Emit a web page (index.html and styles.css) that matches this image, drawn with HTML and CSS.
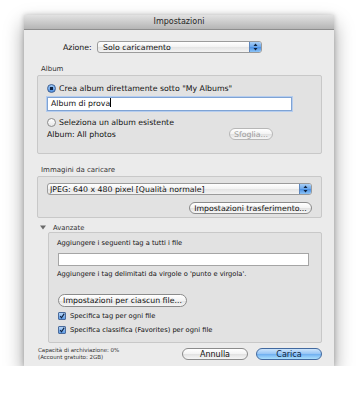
FILE: index.html
```html
<!DOCTYPE html>
<html lang="it">
<head>
    <meta charset="UTF-8">
    <title>Impostazioni</title>
    <link rel="stylesheet" href="styles.css">
</head>
<body>
    <div class="window">
        <div class="titlebar">Impostazioni</div>
        <div class="content">
            <div class="action-row">
                <span class="action-label">Azione:</span>
                <div class="popup action-popup">
                    <span class="popup-text">Solo caricamento</span>
                    <span class="stepper"><svg width="5" height="8" viewBox="0 0 5 8"><path d="M2.5 0.5 L4.5 3 L0.5 3 Z M0.5 5 L4.5 5 L2.5 7.5 Z" fill="#10243f"/></svg></span>
                </div>
            </div>

            <div class="group-title">Album</div>
            <div class="group album-box">
                <div class="choice">
                    <span class="radio on"></span>
                    <span>Crea album direttamente sotto "My Albums"</span>
                </div>
                <div class="field focused">Album di prova<span class="caret"></span></div>
                <div class="choice second">
                    <span class="radio"></span>
                    <span>Seleziona un album esistente</span>
                </div>
                <div class="album-row">
                    <span>Album: All photos</span>
                    <span class="button disabled browse">Sfoglia...</span>
                </div>
            </div>

            <div class="group-title">Immagini da caricare</div>
            <div class="group images-box">
                <div class="popup">
                    <span class="popup-text tight">JPEG: 640 x 480 pixel [Qualità normale]</span>
                    <span class="stepper"><svg width="5" height="8" viewBox="0 0 5 8"><path d="M2.5 0.5 L4.5 3 L0.5 3 Z M0.5 5 L4.5 5 L2.5 7.5 Z" fill="#10243f"/></svg></span>
                </div>
                <div class="right">
                    <span class="button transfer">Impostazioni trasferimento...</span>
                </div>
            </div>

            <div class="disclosure">
                <svg width="6" height="5" viewBox="0 0 6 5"><path d="M0 0.5 L6 0.5 L3 4.5 Z" fill="#6a6a6a"/></svg>
                <span>Avanzate</span>
            </div>
            <div class="group advanced-box">
                <div class="line">Aggiungere i seguenti tag a tutti i file</div>
                <div class="field tags"></div>
                <div class="line hint">Aggiungere i tag delimitati da virgole o 'punto e virgola'.</div>
                <span class="button per-file">Impostazioni per ciascun file...</span>
                <div class="check-row first">
                    <span class="checkbox"><svg width="8" height="8" viewBox="0 0 8 8"><path d="M1.5 4 L3.3 6.3 L7 0.8" fill="none" stroke="#0f2240" stroke-width="1.5"/></svg></span>
                    <span>Specifica tag per ogni file</span>
                </div>
                <div class="check-row">
                    <span class="checkbox"><svg width="8" height="8" viewBox="0 0 8 8"><path d="M1.5 4 L3.3 6.3 L7 0.8" fill="none" stroke="#0f2240" stroke-width="1.5"/></svg></span>
                    <span>Specifica classifica (Favorites) per ogni file</span>
                </div>
            </div>

            <div class="footer">
                <div class="storage">
                    <div>Capacità di archiviazione: 0%</div>
                    <div>(Account gratuito: 2GB)</div>
                </div>
                <span class="button cancel">Annulla</span>
                <span class="button default">Carica</span>
            </div>
        </div>
    </div>
</body>
</html>
```

FILE: styles.css
```css
body {
    margin: 0;
    background: #fff;
    font-family: "DejaVu Sans", sans-serif;
    font-size: 7.8px;
    color: #111;
}
.window {
    width: 310px;
    height: 351px;
    margin: 15px 0 0 24px;
    background: #ebebeb;
    box-shadow: 0 9px 18px rgba(0,0,0,0.38), 0 0 5px rgba(0,0,0,0.22);
}
.titlebar {
    height: 14px;
    line-height: 14px;
    text-align: center;
    font-size: 8px;
    background: linear-gradient(#e2e2e2, #b5b5b5);
    border-bottom: 1px solid #8e8e8e;
    color: #262626;
}
.content {
    padding: 0 12px 0 13px;
}
.action-row {
    display: flex;
    align-items: center;
    margin-top: 11px;
    height: 12px;
}
.action-label {
    margin-left: 26px;
    width: 29px;
    margin-right: 5px;
}
.popup {
    display: flex;
    align-items: center;
    height: 12px;
    box-sizing: border-box;
    border: 1px solid #9b9b9b;
    border-radius: 3px;
    background: linear-gradient(#ffffff, #f2f2f2 50%, #e4e4e4 51%, #f3f3f3);
    overflow: hidden;
}
.action-popup {
    width: 165px;
}
.popup-text {
    padding-left: 5px;
    flex: 1;
    white-space: nowrap;
}
.popup-text.tight {
    padding-left: 2px;
}
.stepper {
    width: 11px;
    height: 100%;
    display: flex;
    align-items: center;
    justify-content: center;
    background: linear-gradient(#a9cff6, #6aa6ea 50%, #4a8fe2 51%, #8cc3f7);
    border-left: 1px solid #5c86bd;
}
.group-title {
    margin-top: 12px;
    height: 9px;
    line-height: 9px;
    padding-left: 4px;
    font-size: 7px;
    color: #333;
}
.group {
    box-sizing: border-box;
    border: 1px solid #c8c8c8;
    border-radius: 2px;
    background: #e2e2e2;
}
.album-box {
    margin-top: 1px;
    height: 79px;
    padding: 6px 10px 0 9px;
}
.choice {
    display: flex;
    align-items: center;
    height: 12px;
}
.choice.second {
    margin-top: 5px;
}
.radio {
    width: 9px;
    height: 9px;
    box-sizing: border-box;
    border-radius: 50%;
    border: 1px solid #8a8a8a;
    background: linear-gradient(#ffffff, #e6e6e6);
    margin-right: 3px;
}
.radio.on {
    border-color: #3d5f92;
    background: radial-gradient(circle, #0f2442 0, #0f2442 1.5px, transparent 2px), linear-gradient(#9cc6f4, #4f8fe0);
}
.field {
    box-sizing: border-box;
    height: 14px;
    line-height: 12px;
    margin-top: 3px;
    width: 245px;
    padding-left: 3px;
    background: #fff;
    border: 1px solid #9a9a9a;
}
.field.focused {
    border-color: #7fa3d4;
    box-shadow: 0 0 0 1px #b5cdef;
}
.caret {
    display: inline-block;
    width: 1px;
    height: 9px;
    background: #000;
    vertical-align: -1px;
}
.album-row {
    display: flex;
    align-items: center;
    height: 12px;
}
.button {
    display: inline-flex;
    align-items: center;
    justify-content: center;
    box-sizing: border-box;
    height: 12px;
    border: 1px solid #8b8b8b;
    border-radius: 7px;
    background: linear-gradient(#ffffff, #f3f3f3 50%, #e1e1e1 51%, #f6f6f6);
    white-space: nowrap;
}
.button.disabled {
    color: #9c9c9c;
    border-color: #b7b7b7;
}
.browse {
    width: 44px;
    margin-left: auto;
    margin-right: 38px;
}
.images-box {
    margin-top: 1px;
    height: 42px;
    padding: 6px 9px 0 9px;
}
.right {
    display: flex;
    justify-content: flex-end;
    margin-top: 7px;
}
.transfer {
    width: 123px;
}
.disclosure {
    display: flex;
    align-items: center;
    margin-top: 5px;
    height: 9px;
    padding-left: 3px;
    font-size: 6.8px;
    color: #333;
}
.disclosure span {
    margin-left: 7px;
}
.advanced-box {
    margin-left: 11px;
    height: 111px;
    padding: 6px 0 0 8px;
}
.line {
    height: 9px;
    line-height: 9px;
    font-size: 6.7px;
}
.field.tags {
    margin: 5px 0 0 1px;
    width: 251px;
    height: 13px;
    border-color: #a5a5a5;
}
.hint {
    margin-top: 4px;
}
.per-file {
    margin: 15px 0 0 1px;
    width: 129px;
    height: 13px;
}
.check-row {
    display: flex;
    align-items: center;
    height: 12px;
    margin-top: 2px;
    font-size: 6.7px;
}
.check-row.first {
    margin-top: 3px;
}
.checkbox {
    width: 8px;
    height: 8px;
    box-sizing: border-box;
    margin: 0 4px 0 1px;
    border: 1px solid #4a6b9c;
    border-radius: 1px;
    background: linear-gradient(#b3d4f7, #5e9be4);
    display: flex;
    align-items: center;
    justify-content: center;
}
.footer {
    display: flex;
    align-items: flex-start;
    margin-top: 5px;
}
.storage {
    margin: -1px 0 0 1px;
    font-size: 5.5px;
    line-height: 6.5px;
    color: #333;
}
.cancel {
    width: 66px;
    margin-left: auto;
    font-size: 8px;
}
.default {
    width: 66px;
    margin-left: 8px;
    font-size: 8px;
    color: #0c1f3d;
    border-color: #42699f;
    background: linear-gradient(#cde4fb, #94c4f5 50%, #6eaef0 51%, #ace0fd);
}
```
